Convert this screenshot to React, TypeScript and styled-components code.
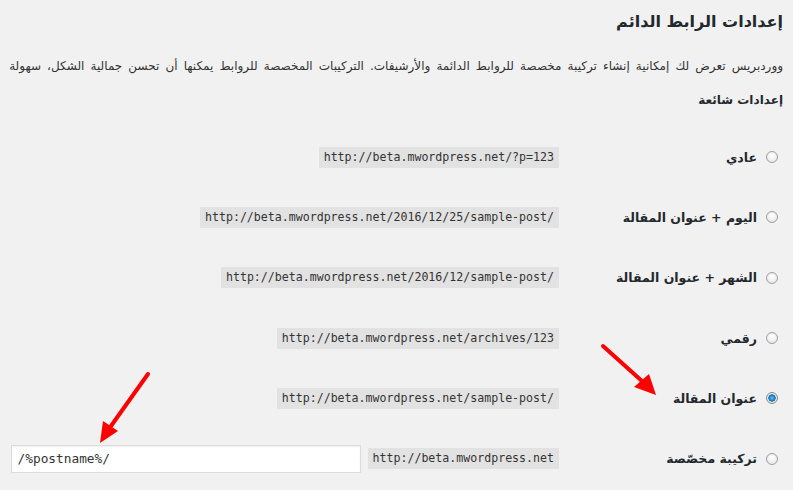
import React from "react";
import styled, { createGlobalStyle } from "styled-components";

const GlobalStyle = createGlobalStyle`
  html, body { margin: 0; padding: 0; background: #f1f1f1; }
  body { font-family: "DejaVu Sans", "Noto Sans", sans-serif; color: #23282d; }
`;

const Page = styled.div`
  position: relative;
  direction: rtl;
  width: 793px;
  height: 490px;
  overflow: hidden;
  box-sizing: border-box;
  padding-right: 10px;
`;

const Title = styled.h1`
  margin: 0;
  padding-top: 7px;
  font-size: 16px;
  line-height: 30px;
  font-weight: 700;
  color: #23282d;
`;

const Desc = styled.p`
  margin: 17px 0 0;
  font-size: 12px;
  line-height: 24px;
  word-spacing: 2.3px;
  white-space: nowrap;
  color: #333;
`;

const Section = styled.h2`
  margin: 12px 0 0;
  font-size: 12px;
  line-height: 20px;
  font-weight: 700;
  color: #23282d;
`;

const Table = styled.div`
  margin-top: 17px;
  display: flex;
  flex-direction: column;
`;

const Row = styled.div`
  display: grid;
  grid-template-columns: 214px 1fr;
  height: 60.3px;
  align-items: center;
`;

const Label = styled.label`
  display: flex;
  align-items: center;
  gap: 9px;
  padding-right: 5px;
  font-size: 12.5px;
  font-weight: 700;
  color: #23282d;
  white-space: nowrap;
`;

const Radio = styled.input.attrs({ type: "radio" })`
  appearance: none;
  -webkit-appearance: none;
  margin: 0;
  width: 12px;
  height: 12px;
  border-radius: 50%;
  box-sizing: border-box;
  border: 1px solid #a0a0a0;
  background: radial-gradient(circle at 50% 35%, #ffffff 0%, #f4f4f4 45%, #d8d8d8 100%);
  box-shadow: inset 0 0 0 1px #ececec;
  flex-shrink: 0;
  &:checked {
    border-color: #8a8a8a;
    background: radial-gradient(circle at 50% 50%, #5ec0ff 0%, #1a84c9 38%, #0d5c94 48%, #e8e8e8 56%, #d4d4d4 100%);
  }
`;

const Cell = styled.div`
  display: flex;
  align-items: center;
  gap: 7px;
  padding: 0 10px;
`;

const Code = styled.code`
  direction: ltr;
  font-family: "DejaVu Sans Mono", "Liberation Mono", monospace;
  font-size: 11.6px;
  line-height: 15px;
  padding: 3px 5px;
  background: #e2e2e2;
  color: #333;
  white-space: nowrap;
`;

const TextInput = styled.input`
  direction: ltr;
  width: 350px;
  height: 28px;
  box-sizing: border-box;
  margin: 0;
  padding: 0 6px;
  border: 1px solid #dcdcdc;
  background: #fff;
  box-shadow: inset 0 1px 2px rgba(0, 0, 0, 0.07);
  font-family: "DejaVu Sans Mono", "Liberation Mono", monospace;
  font-size: 12.8px;
  color: #333;
  outline: none;
`;

const Overlay = styled.svg`
  position: absolute;
  left: 0;
  top: 0;
  pointer-events: none;
`;

type Option = { label: string; code: string; checked?: boolean };

const options: Option[] = [
  { label: "عادي", code: "http://beta.mwordpress.net/?p=123" },
  { label: "اليوم + عنوان المقالة", code: "http://beta.mwordpress.net/2016/12/25/sample-post/" },
  { label: "الشهر + عنوان المقالة", code: "http://beta.mwordpress.net/2016/12/sample-post/" },
  { label: "رقمي", code: "http://beta.mwordpress.net/archives/123" },
  { label: "عنوان المقالة", code: "http://beta.mwordpress.net/sample-post/", checked: true },
];

export default function App() {
  return (
    <>
      <GlobalStyle />
      <Page>
        <Title>إعدادات الرابط الدائم</Title>
        <Desc>
          ووردبريس تعرض لك إمكانية إنشاء تركيبة مخصصة للروابط الدائمة والأرشيفات. التركيبات المخصصة للروابط يمكنها أن تحسن جمالية الشكل، سهولة
        </Desc>
        <Section>إعدادات شائعة</Section>
        <Table>
          {options.map((o) => (
            <Row key={o.label}>
              <Label>
                <Radio name="permalink" defaultChecked={o.checked} />
                {o.label}
              </Label>
              <Cell>
                <Code>{o.code}</Code>
              </Cell>
            </Row>
          ))}
          <Row>
            <Label>
              <Radio name="permalink" />
              تركيبة مخصّصة
            </Label>
            <Cell>
              <Code>http://beta.mwordpress.net</Code>
              <TextInput defaultValue="/%postname%/" />
            </Cell>
          </Row>
        </Table>
        <Overlay width="793" height="490" viewBox="0 0 793 490">
          <line x1="603" y1="346" x2="643" y2="382" stroke="#ff0000" strokeWidth="4" strokeLinecap="round" />
          <polygon points="656,395 634,387 649,374" fill="#ff0000" />
          <line x1="148" y1="374" x2="111" y2="426" stroke="#ff0000" strokeWidth="4" strokeLinecap="round" />
          <polygon points="100,443 103,421 118,431" fill="#ff0000" />
        </Overlay>
      </Page>
    </>
  );
}
